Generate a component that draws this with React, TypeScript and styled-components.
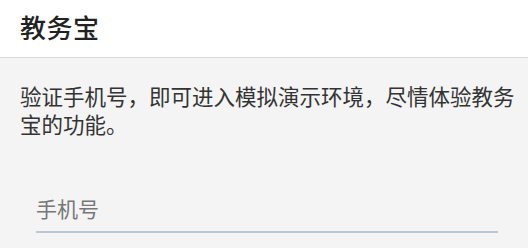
import React from "react";
import styled, { createGlobalStyle } from "styled-components";

const GlobalStyle = createGlobalStyle`
  html, body {
    margin: 0;
    padding: 0;
    background: #f4f4f4;
  }
  body {
    font-family: "Noto Sans CJK SC", "Noto Sans", sans-serif;
  }
`;

const Page = styled.div`
  min-height: 248px;
  background: #f4f4f4;
`;

const Header = styled.header`
  height: 58px;
  box-sizing: border-box;
  padding: 0 20px;
  display: flex;
  align-items: center;
  background: #ffffff;
  border-bottom: 1px solid #d9d9d9;
`;

const Title = styled.h1`
  margin: 0 0 4px;
  font-size: 26px;
  font-weight: 500;
  color: #222222;
  letter-spacing: 0.5px;
`;

const Content = styled.section`
  padding: 24px 10px 0 20px;
`;

const Intro = styled.p`
  margin: 0;
  font-size: 21.5px;
  line-height: 28px;
  color: #333333;
`;

const Form = styled.form`
  padding: 47px 20px 0 16px;
`;

const PhoneInput = styled.input`
  display: block;
  width: 100%;
  height: 48px;
  box-sizing: border-box;
  padding: 0;
  border: none;
  border-bottom: 2px solid #bcc8d3;
  background: transparent;
  outline: none;
  font-family: "Noto Sans CJK SC", "Noto Sans", sans-serif;
  font-size: 21px;
  color: #333333;

  &::placeholder {
    color: #777777;
  }
`;

const App = () => {
  return (
    <Page>
      <GlobalStyle />
      <Header>
        <Title>教务宝</Title>
      </Header>
      <Content>
        <Intro>验证手机号，即可进入模拟演示环境，尽情体验教务宝的功能。</Intro>
        <Form onSubmit={(e) => e.preventDefault()}>
          <PhoneInput type="tel" placeholder="手机号" />
        </Form>
      </Content>
    </Page>
  );
};

export default App;
